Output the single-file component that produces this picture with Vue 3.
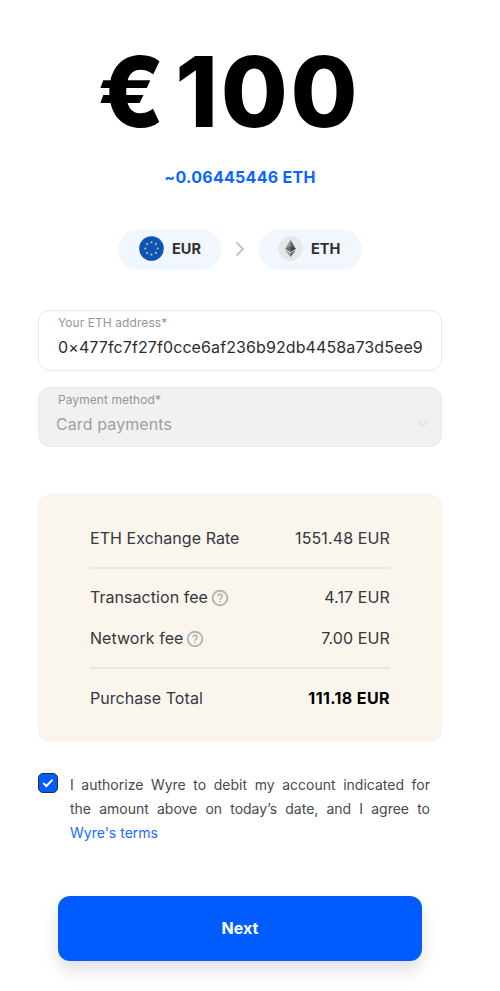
<script setup>
const address = '0×477fc7f27f0cce6af236b92db4458a73d5ee9'
const fees = [
  { label: 'Transaction fee', value: '4.17 EUR' },
  { label: 'Network fee', value: '7.00 EUR' },
]
const stars = Array.from({ length: 8 }, (_, i) => {
  const a = (i * Math.PI) / 4
  return { x: 12.5 + 6.2 * Math.sin(a), y: 12.5 - 6.2 * Math.cos(a) }
})
</script>

<template>
  <main class="checkout">
    <h1 class="amount"><span class="sign">€</span><span class="number">100</span></h1>
    <p class="estimate"><span>~0.06445446 ETH</span></p>

    <div class="pair">
      <div class="pill">
        <svg class="coin" viewBox="0 0 25 25">
          <circle cx="12.5" cy="12.5" r="12.3" fill="#0b55b5" />
          <circle v-for="(s, i) in stars" :key="i" :cx="s.x" :cy="s.y" r="1.1" fill="#c9b493" />
        </svg>
        <span>EUR</span>
      </div>
      <svg class="arrow" viewBox="0 0 10 16"><path d="M1.500 1.500 8 8l-6.500 6.500" fill="none" stroke="#c4c4c4" stroke-width="2" /></svg>
      <div class="pill eth">
        <svg class="coin" viewBox="0 0 25 25">
          <circle cx="12.500" cy="12.500" r="12.200" fill="#e6e7e8" />
          <path d="M12.500 3.700 7.200 12.700l5.300 3.200z" fill="#929292" />
          <path d="M12.500 3.700v12.200l5.300-3.200z" fill="#606060" />
          <path d="M7.200 12.700l5.300-2.400v5.600z" fill="#6b6d72" />
          <path d="M12.500 10.300v5.600l5.300-3.200z" fill="#3d424c" />
          <path d="M7.200 14l5.300 7.300v-4.200z" fill="#989898" />
          <path d="M17.800 14l-5.300 7.300v-4.200z" fill="#626262" />
        </svg>
        <span>ETH</span>
      </div>
    </div>

    <div class="field">
      <label>Your ETH address*</label>
      <div class="value"><span class="address">{{ address }}</span></div>
    </div>
    <div class="field disabled">
      <label>Payment method*</label>
      <div class="value">
        <span>Card payments</span>
        <svg class="caret" viewBox="0 0 12 8"><path d="M1 1.500l5 4.500 5-4.500" fill="none" stroke="#e3e3e3" stroke-width="2" /></svg>
      </div>
    </div>

    <section class="summary">
      <div class="row rate"><span>ETH Exchange Rate</span><span class="figure">1551.48 EUR</span></div>
      <div class="fees">
        <div v-for="fee in fees" :key="fee.label" class="row">
          <span class="name">{{ fee.label }}
            <svg class="help" viewBox="0 0 18 18">
              <circle cx="9" cy="9" r="7.300" fill="none" stroke="#b5b4b1" stroke-width="1.900" />
              <path d="M6.900 7.300a2.150 2.150 0 1 1 3.250 1.850C9.300 9.700 9.050 9.900 9.050 10.700" fill="none" stroke="#b5b4b1" stroke-width="1.600" />
              <circle cx="9.050" cy="12.600" r="0.900" fill="#b5b4b1" />
            </svg>
          </span>
          <span class="figure">{{ fee.value }}</span>
        </div>
      </div>
      <div class="row total"><span>Purchase Total</span><strong>111.18 EUR</strong></div>
    </section>

    <div class="consent">
      <span class="checkbox">
        <svg viewBox="0 0 12 10"><path d="M1.200 5l3.200 3L10.600 1.600" fill="none" stroke="#fff" stroke-width="2" /></svg>
      </span>
      <p>I authorize Wyre to debit my account indicated for the&nbsp;amount above on today’s date, and I agree to <a>Wyre's&nbsp;terms</a></p>
    </div>

    <button class="next" type="button">Next</button>
  </main>
</template>

<style>
body {
  background: #fff;
}
</style>

<style scoped>
.checkout {
  box-sizing: border-box;
  width: 480px;
  height: 991px;
  padding: 42px 38px 0;
  font-family: Inter, 'Liberation Sans', sans-serif;
  font-size: 16px;
  color: #34373c;
}
.amount {
  display: flex;
  gap: 10.500px;
  height: 100px;
  margin: 0 0 0 59.500px;
  font-size: 97px;
  font-weight: 800;
  line-height: 100px;
  color: #000;
}
.number {
  letter-spacing: 2.700px;
}
.estimate {
  height: 24px;
  margin: 23px 0 0;
  text-align: center;
  font-weight: 700;
  line-height: 24px;
  letter-spacing: 0.28px;
  color: #0b66ff;
}
.pair {
  display: flex;
  justify-content: center;
  align-items: center;
  gap: 14px;
  height: 41px;
  margin-top: 40px;
}
.pill {
  box-sizing: border-box;
  display: flex;
  align-items: center;
  gap: 8px;
  width: 103px;
  height: 41px;
  padding: 0 0 2px 21px;
  border-radius: 21px;
  background: #f0f7ff;
  font-size: 14.500px;
  font-weight: 700;
  color: #303030;
}
.pill.eth {
  padding-left: 19px;
}
.pill span {
  margin-top: -1px;
}
.coin {
  width: 25px;
  height: 25px;
}
.arrow {
  width: 10px;
  height: 16px;
  margin-top: -2px;
}
.field {
  box-sizing: border-box;
  height: 61px;
  margin-top: 40px;
  padding: 4px 19px 0;
  border: 1px solid #e9e9e5;
  border-radius: 12px;
}
.field label {
  display: block;
  font-size: 12px;
  letter-spacing: 0.07px;
  line-height: 16px;
  color: #969692;
}
.value {
  display: flex;
  justify-content: space-between;
  align-items: center;
  height: 32px;
  color: #2c2c30;
}
.address {
  letter-spacing: 0.1px;
}
.field.disabled {
  height: 60px;
  margin-top: 16px;
  background: #f1f1f1;
}
.disabled .value {
  height: 32px;
  margin: 0 -7px 0 -2px;
  letter-spacing: 0.1px;
  color: #a09f9c;
}
.caret {
  width: 12px;
  height: 8px;
}
.summary {
  box-sizing: border-box;
  height: 248px;
  margin-top: 47px;
  padding: 14px 52px 0;
  border-radius: 12px;
  background: #faf6ee;
  letter-spacing: 0.05px;
}
.row {
  display: flex;
  justify-content: space-between;
  align-items: center;
  height: 41px;
}
.rate {
  height: 60px;
  margin-bottom: -1px;
}
.fees {
  padding: 7px 0 9px;
  border: solid #e7e9e9;
  border-width: 2px 0;
}
.figure {
  letter-spacing: 0.12px;
}
.total {
  height: 58px;
}
.total strong {
  font-weight: 700;
  letter-spacing: 0.400px;
  color: #000;
}
.name {
  display: flex;
  align-items: center;
  gap: 3px;
}
.help {
  width: 18px;
  height: 18px;
  margin-top: 2px;
}
.consent {
  display: flex;
  gap: 12px;
  margin-top: 31px;
}
.checkbox {
  box-sizing: border-box;
  display: flex;
  justify-content: center;
  align-items: center;
  flex: none;
  width: 20px;
  height: 20px;
  border: 1px solid #292c38;
  border-radius: 5px;
  background: #005cff;
}
.checkbox svg {
  width: 12px;
  height: 10px;
}
.consent p {
  width: 360px;
  height: 73px;
  margin: 0;
  font-size: 14px;
  line-height: 24.200px;
  text-align: justify;
  color: #4a4a4a;
}
.consent a {
  color: #176eff;
}
.next {
  display: block;
  width: 364px;
  height: 65px;
  margin: 50px 0 0 20px;
  padding: 0 0 1px;
  border: 0;
  border-radius: 12px;
  background: #005cff;
  box-shadow: 0 9px 18px rgba(0, 0, 0, 0.13);
  font: 700 16px/64px Inter, 'Liberation Sans', sans-serif;
  color: #fff;
}
</style>
